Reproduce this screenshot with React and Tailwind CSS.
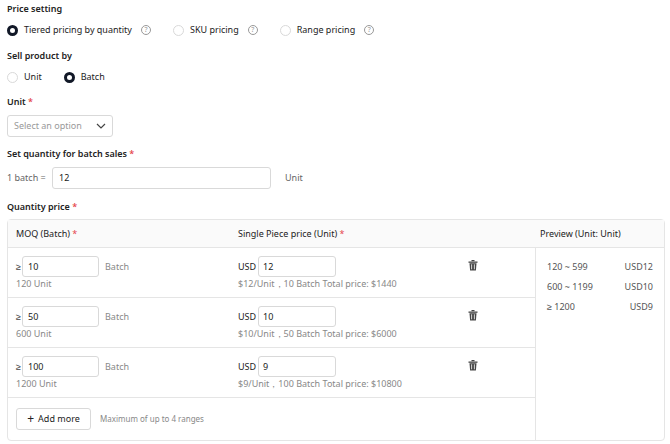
import React from 'react';

const Radio = ({ on, label, help }) => (
  <div className="flex items-center gap-[6px] h-[12px]">
    <span className={on ? 'w-[11px] h-[11px] rounded-full border-[3px] border-[#111827] bg-white' : 'w-[11px] h-[11px] rounded-full border border-[#d9d9d9] bg-white'} />
    <span className="text-[#222]">{label}</span>
    {help && <span className="ml-[3px] w-[10px] h-[10px] rounded-full border border-[#999] text-[7px] leading-[8px] text-center text-[#999]">?</span>}
  </div>
);

const Trash = () => (
  <svg width="10" height="11" viewBox="0 0 10 11" fill="#444">
    <rect x="3.5" y="0" width="3" height="1.2" />
    <rect x="0.5" y="1.5" width="9" height="1.3" />
    <path d="M1.5 3.3h7l-.6 7.2H2.1z" />
    <rect x="3.3" y="4.3" width=".8" height="5" fill="#fff" />
    <rect x="5.9" y="4.3" width=".8" height="5" fill="#fff" />
  </svg>
);

const rows = [
  { q: '10', u: '120 Unit', p: '12', t: '$12/Unit，10 Batch Total price: $1440' },
  { q: '50', u: '600 Unit', p: '10', t: '$10/Unit，50 Batch Total price: $6000' },
  { q: '100', u: '1200 Unit', p: '9', t: '$9/Unit，100 Batch Total price: $10800' },
];

export default function App() {
  return (
    <div className="w-[670px] h-[444px] bg-white px-[7px] pt-[3px] text-[9px] leading-[12px] text-[#222] font-[Inter,'Liberation_Sans',sans-serif] overflow-hidden">
      <div className="font-semibold">Price setting</div>
      <div className="flex gap-[22px] mt-[9px] items-center">
        <Radio on label="Tiered pricing by quantity" help />
        <Radio label="SKU pricing" help />
        <Radio label="Range pricing" help />
      </div>
      <div className="font-semibold mt-[14px]">Sell product by</div>
      <div className="flex gap-[22px] mt-[9px] items-center">
        <Radio label="Unit" />
        <Radio on label="Batch" />
      </div>
      <div className="font-semibold mt-[13px]">Unit <span className="text-[#e5484d]">*</span></div>
      <div className="mt-[7px] w-[106px] h-[22px] border border-[#d9d9d9] rounded-[3px] flex items-center justify-between px-[6px] text-[#999]">
        <span>Select an option</span>
        <svg width="10" height="6" viewBox="0 0 10 6" fill="none" stroke="#444" strokeWidth="1.2"><path d="M1 1l4 4 4-4" /></svg>
      </div>
      <div className="font-semibold mt-[11px]">Set quantity for batch sales <span className="text-[#e5484d]">*</span></div>
      <div className="flex items-center mt-[7px]">
        <span className="text-[#666] w-[45px]">1 batch =</span>
        <div className="w-[219px] h-[22px] border border-[#d9d9d9] rounded-[3px] flex items-center px-[6px]">12</div>
        <span className="text-[#666] ml-[14px]">Unit</span>
      </div>
      <div className="font-semibold mt-[12px]">Quantity price <span className="text-[#e5484d]">*</span></div>
      <div className="mt-[6px] w-[658px] border border-[#e5e5e5] rounded-[4px]">
        <div className="flex h-[28px] items-center bg-[#fafafa] border-b border-[#e5e5e5]">
          <div className="w-[230px] pl-[8px]">MOQ (Batch) <span className="text-[#e5484d]">*</span></div>
          <div className="w-[297px]">Single Piece price (Unit) <span className="text-[#e5484d]">*</span></div>
          <div className="pl-[5px]">Preview (Unit: Unit)</div>
        </div>
        <div className="flex">
          <div className="w-[528px] border-r border-[#e5e5e5]">
            {rows.map((r) => (
              <div key={r.q} className="h-[50px] border-b border-[#e5e5e5] flex pt-[8px]">
                <div className="w-[230px] pl-[8px]">
                  <div className="flex items-center">
                    <span className="w-[5px] mr-[1px] text-[#444]">≥</span>
                    <div className="w-[77px] h-[21px] rounded-[3px] border border-[#d9d9d9] flex items-center px-[5px]">{r.q}</div>
                    <span className="ml-[6px] text-[#888]">Batch</span>
                  </div>
                  <div className="text-[#888] mt-[1px]">{r.u}</div>
                </div>
                <div className="w-[230px]">
                  <div className="flex items-center">
                    <span className="w-[20px]">USD</span>
                    <div className="w-[78px] h-[21px] border border-[#d9d9d9] rounded-[3px] flex items-center px-[4px]">{r.p}</div>
                  </div>
                  <div className="text-[#888] mt-[1px]">{r.t}</div>
                </div>
                <div className="pt-[4px]"><Trash /></div>
              </div>
            ))}
            <div className="h-[42px] flex items-center pl-[8px]">
              <div className="h-[22px] w-[75px] border border-[#d9d9d9] rounded-[3px] flex items-center justify-center gap-[4px]">
                <span className="text-[12px] leading-none">+</span>Add more
              </div>
              <span className="ml-[9px] text-[#888] text-[8px]">Maximum of up to 4 ranges</span>
            </div>
          </div>
          <div className="flex-1 px-[11px] pt-[13px] text-[#555] flex flex-col gap-[8px]">
            <div className="flex justify-between"><span>120 ~ 599</span><span>USD12</span></div>
            <div className="flex justify-between"><span>600 ~ 1199</span><span>USD10</span></div>
            <div className="flex justify-between"><span>≥ 1200</span><span>USD9</span></div>
          </div>
        </div>
      </div>
    </div>
  );
}
